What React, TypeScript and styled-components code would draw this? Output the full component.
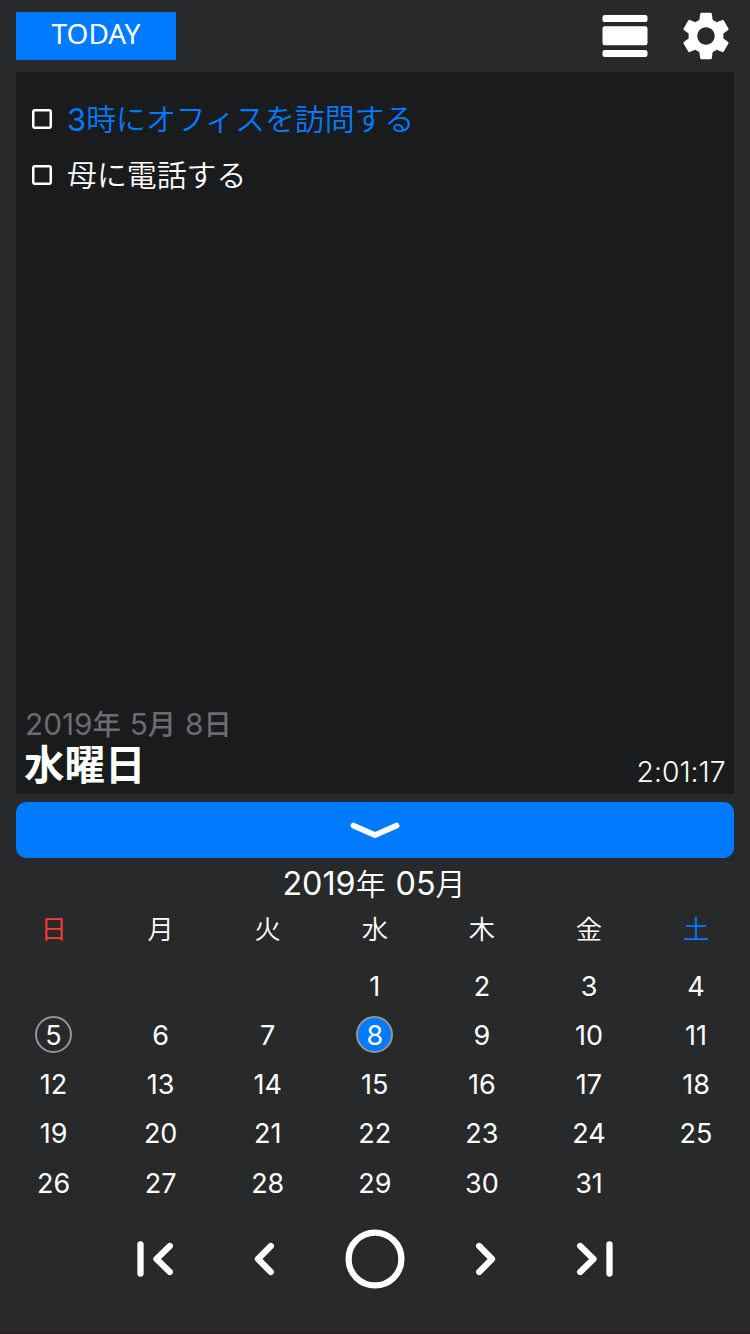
import React from "react";
import styled, { createGlobalStyle } from "styled-components";
import { MdSettings } from "react-icons/md";

const GlobalStyle = createGlobalStyle`
  * { box-sizing: border-box; }
  body {
    margin: 0;
    background: #28292b;
    color: #fff;
    font-family: Inter, "Noto Sans CJK JP", sans-serif;
    font-feature-settings: "calt" 0;
  }
  button {
    border: 0;
    padding: 0;
    background: none;
    color: inherit;
    font: inherit;
  }
`;

const BLUE = "#007aff";

const Screen = styled.main`
  width: 750px;
  height: 1334px;
  overflow: hidden;
  display: flex;
  flex-direction: column;
  border-bottom: 1px solid #2b1c20;
`;

const TopBar = styled.header`
  height: 72px;
  padding: 0 15px 0 16px;
  display: flex;
  align-items: center;
  gap: 29px;
`;

const TodayButton = styled.button`
  width: 160px;
  height: 48px;
  margin-right: auto;
  padding-bottom: 5px;
  background: ${BLUE};
  font-family: "Noto Sans", sans-serif;
  font-size: 28px;
  line-height: 43px;
`;

const IconButton = styled.button`
  display: flex;
`;

const TaskPanel = styled.section`
  height: 722px;
  margin: 0 16px;
  padding: 19px 9px 5px;
  background: #1a1b1c;
  display: flex;
  flex-direction: column;
`;

const TaskList = styled.ul`
  list-style: none;
  margin: 0 0 auto;
  padding: 0 7px;
`;

const Task = styled.li<{ $color?: string }>`
  height: 56px;
  display: flex;
  align-items: center;
  gap: 15px;
  color: ${(p) => p.$color ?? "#fff"};
  font-size: 29.9px;
  font-weight: 350;
  line-height: 40px;
`;

const CheckBox = styled.span`
  width: 20px;
  height: 20px;
  border: 2.5px solid #fff;
  border-radius: 3px;
  box-shadow: inset 0 0 0 0.5px #fff;
`;

const Digits = styled.span<{ $size: number; $drop?: number }>`
  font-size: ${(p) => p.$size}px;
  font-weight: 400;
  line-height: 1;
  vertical-align: ${(p) => -(p.$drop ?? 0)}px;
`;

const DateLine = styled.div`
  height: 36px;
  color: #6b6b73;
  font-size: 28.3px;
  font-weight: 500;
  line-height: 37px;
  word-spacing: 1.3px;
`;

const DayLine = styled.div`
  height: 46px;
  display: flex;
  justify-content: space-between;
  align-items: flex-end;
`;

const Weekday = styled.strong`
  margin-left: -1px;
  font-size: 40.5px;
  line-height: 46px;
`;

const Clock = styled.time`
  margin-right: -0.5px;
  font-size: 28.3px;
  font-weight: 300;
  line-height: 34px;
`;

const CollapseBar = styled.button`
  height: 56px;
  margin: 8px 16px 0;
  border-radius: 10px;
  background: ${BLUE};
  display: flex;
  align-items: center;
  justify-content: center;
`;

const MonthTitle = styled.h1`
  height: 52px;
  margin: 0;
  padding-right: 2px;
  text-align: center;
  font-size: 30px;
  font-weight: 350;
  line-height: 52px;
  word-spacing: 1.5px;
`;

const Week = styled.div<{ $height: number; $size: number }>`
  height: ${(p) => p.$height}px;
  padding-right: 0.4px;
  display: grid;
  grid-template-columns: repeat(7, 1fr);
  place-items: center;
  font-size: ${(p) => p.$size}px;
`;

const DayName = styled.span<{ $color?: string }>`
  color: ${(p) => p.$color ?? "#fff"};
  font-weight: 350;
  line-height: 40px;
`;

const Days = styled.div`
  margin-top: 11px;
`;

const Day = styled.span<{ $ring?: boolean; $fill?: boolean }>`
  width: 37px;
  height: 37px;
  border: 2px solid ${(p) => (p.$ring ? "#959596" : "transparent")};
  border-radius: 50%;
  background: ${(p) => (p.$fill ? BLUE : "none")};
  display: flex;
  align-items: center;
  justify-content: center;
  padding-top: 1px;
`;

const Pager = styled.nav`
  height: 100px;
  margin-top: 2px;
  padding: 0 100px;
  display: grid;
  grid-template-columns: repeat(5, 110px);
  place-items: center;
`;

const Glyph = styled.svg`
  display: block;
  fill: none;
  stroke: #fff;
  stroke-linecap: round;
  stroke-linejoin: round;
`;

const weekdays = ["日", "月", "火", "水", "木", "金", "土"];
const dayColors: Record<string, string> = { 日: "#ff3b30", 土: BLUE };
const weeks = [0, 1, 2, 3, 4].map((w) =>
  [0, 1, 2, 3, 4, 5, 6].map((d) => w * 7 + d - 2)
);

export default function App() {
  return (
    <>
      <GlobalStyle />
      <Screen>
        <TopBar>
          <TodayButton>TODAY</TodayButton>
          <IconButton aria-label="表示">
            <svg width="46" height="44" viewBox="0 0 46 44" fill="#fff">
              <rect x="0.5" y="0.9" width="45" height="7.2" rx="2.2" />
              <rect x="0.5" y="12.3" width="45" height="19" rx="2.2" />
              <rect x="0.5" y="36" width="45" height="7" rx="2.2" />
            </svg>
          </IconButton>
          <IconButton aria-label="設定">
            <MdSettings size={58} />
          </IconButton>
        </TopBar>

        <TaskPanel>
          <TaskList>
            <Task $color={BLUE}>
              <CheckBox />
              <span>
                <Digits $size={31} $drop={1}>3</Digits>時にオフィスを訪問する
              </span>
            </Task>
            <Task>
              <CheckBox />
              <span>母に電話する</span>
            </Task>
          </TaskList>
          <DateLine>
            <Digits $size={29.8}>2019</Digits>年 <Digits $size={29.8}>5</Digits>月{" "}
            <Digits $size={29.8}>8</Digits>日
          </DateLine>
          <DayLine>
            <Weekday>水曜日</Weekday>
            <Clock>2:01:17</Clock>
          </DayLine>
        </TaskPanel>

        <CollapseBar aria-label="閉じる">
          <Glyph width="50" height="18" viewBox="0 0 50 18" strokeWidth="5.8">
            <path d="M3.5 4.6 25 14.2 46.5 4.6" />
          </Glyph>
        </CollapseBar>

        <MonthTitle>
          <Digits $size={32.3}>2019</Digits>年 <Digits $size={32.3}>05</Digits>月
        </MonthTitle>
        <Week $height={40} $size={26.3}>
          {weekdays.map((name) => (
            <DayName key={name} $color={dayColors[name]}>
              {name}
            </DayName>
          ))}
        </Week>
        <Days>
          {weeks.map((week) => (
            <Week key={week[0]} $height={49.25} $size={27}>
              {week.map((day) => (
                <Day key={day} $ring={day === 5 || day === 8} $fill={day === 8}>
                  {day > 0 && day < 32 ? day : ""}
                </Day>
              ))}
            </Week>
          ))}
        </Days>

        <Pager>
          <Glyph width="40" height="40" viewBox="0 0 40 40" strokeWidth="6.3">
            <path d="M5.5 5.5V34.5M34.8 7 21.5 20 34.8 33" />
          </Glyph>
          <Glyph width="40" height="40" viewBox="0 0 40 40" strokeWidth="6.3">
            <path d="M25.8 7 13 20 25.8 33" />
          </Glyph>
          <Glyph width="60" height="60" viewBox="0 0 60 60" strokeWidth="6.3">
            <circle cx="30" cy="30" r="26.4" />
          </Glyph>
          <Glyph width="40" height="40" viewBox="0 0 40 40" strokeWidth="6.3">
            <path d="M14.2 7 27 20 14.2 33" />
          </Glyph>
          <Glyph width="40" height="40" viewBox="0 0 40 40" strokeWidth="6.3">
            <path d="M34.5 5.5V34.5M5.2 7 18.5 20 5.2 33" />
          </Glyph>
        </Pager>
      </Screen>
    </>
  );
}
